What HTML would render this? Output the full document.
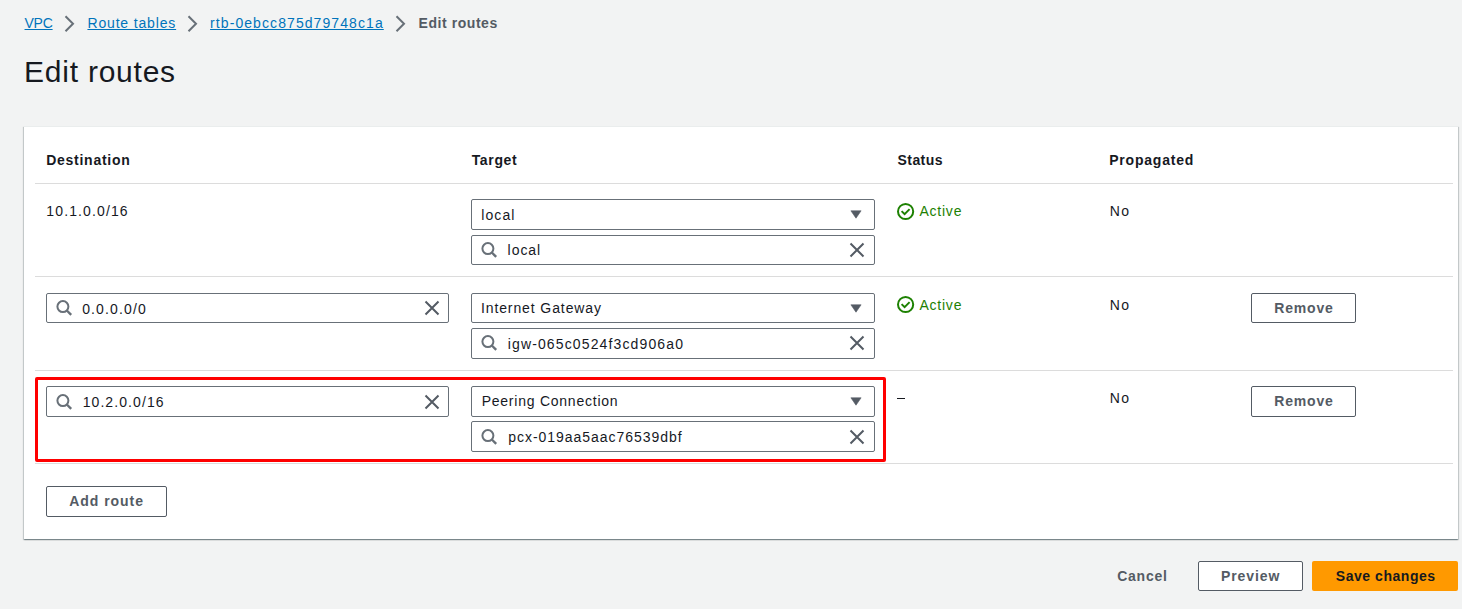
<!DOCTYPE html>
<html><head><meta charset="utf-8"><title>Edit routes</title>
<style>
html,body{margin:0;padding:0;}
body{width:1462px;height:609px;background:#f2f3f3;position:relative;overflow:hidden;font-family:'Liberation Sans', sans-serif;}
.t{position:absolute;white-space:nowrap;}
.ic{position:absolute;overflow:visible;}
.card{position:absolute;left:24px;top:126px;width:1434px;height:413px;background:#fff;border-top:1px solid #eaeded;box-sizing:border-box;box-shadow:0 1px 1px 0 rgba(0,28,36,.3),1px 1px 1px 0 rgba(0,28,36,.15),-1px 1px 1px 0 rgba(0,28,36,.15);}
.hr{position:absolute;left:35px;width:1418px;height:1px;background:#dcdcdc;}
.inp{position:absolute;box-sizing:border-box;border:1px solid #687078;border-radius:2px;background:#fff;}
.btn{position:absolute;box-sizing:border-box;border:1px solid #545b64;border-radius:2px;background:#fff;}
.primary{position:absolute;box-sizing:border-box;border-radius:2px;background:#ff9900;}
.red{position:absolute;left:35px;top:377px;width:851px;height:85px;box-sizing:border-box;border:3px solid #ff0000;border-radius:2px;}
.dash{position:absolute;left:897px;top:398px;width:8px;height:1px;background:#16191f;}
</style></head><body>
<div class="t" style="left:24.54px;top:13.00px;font-size:14px;line-height:20px;color:#0073bb;letter-spacing:-0.246px;text-decoration:underline;">VPC</div>
<div class="t" style="left:87.45px;top:13.00px;font-size:14px;line-height:20px;color:#0073bb;letter-spacing:0.841px;text-decoration:underline;">Route tables</div>
<div class="t" style="left:210.07px;top:13.00px;font-size:14px;line-height:20px;color:#0073bb;letter-spacing:1.081px;text-decoration:underline;">rtb-0ebcc875d79748c1a</div>
<div class="t" style="left:418.56px;top:13.00px;font-size:14px;line-height:20px;font-weight:700;color:#545b64;letter-spacing:0.559px;">Edit routes</div>
<svg class="ic" style="left:64px;top:15px;" width="12" height="18" viewBox="0 0 12 18"><path d="M1.5 1.2 L9 8.7 L1.5 16.2" fill="none" stroke="#687078" stroke-width="2"/></svg>
<svg class="ic" style="left:187px;top:15px;" width="12" height="18" viewBox="0 0 12 18"><path d="M1.5 1.2 L9 8.7 L1.5 16.2" fill="none" stroke="#687078" stroke-width="2"/></svg>
<svg class="ic" style="left:395px;top:15px;" width="12" height="18" viewBox="0 0 12 18"><path d="M1.5 1.2 L9 8.7 L1.5 16.2" fill="none" stroke="#687078" stroke-width="2"/></svg>
<div class="t" style="left:24.04px;top:52.00px;font-size:30px;line-height:40px;color:#16191f;letter-spacing:0.764px;">Edit routes</div>
<div class="card"></div>
<div class="t" style="left:46.26px;top:150.00px;font-size:14px;line-height:20px;font-weight:700;color:#16191f;letter-spacing:0.728px;">Destination</div>
<div class="t" style="left:471.64px;top:150.00px;font-size:14px;line-height:20px;font-weight:700;color:#16191f;letter-spacing:0.668px;">Target</div>
<div class="t" style="left:897.50px;top:150.00px;font-size:14px;line-height:20px;font-weight:700;color:#16191f;letter-spacing:0.438px;">Status</div>
<div class="t" style="left:1109.16px;top:150.00px;font-size:14px;line-height:20px;font-weight:700;color:#16191f;letter-spacing:0.794px;">Propagated</div>
<div class="hr" style="top:183px"></div>
<div class="hr" style="top:276px"></div>
<div class="hr" style="top:370px"></div>
<div class="hr" style="top:463px"></div>
<div class="t" style="left:46.33px;top:201.00px;font-size:14px;line-height:20px;color:#16191f;letter-spacing:1.122px;">10.1.0.0/16</div>
<div class="inp" style="left:471px;top:199px;width:404px;height:31px;"></div>
<div class="t" style="left:481.36px;top:205.00px;font-size:14px;line-height:20px;color:#16191f;letter-spacing:1.047px;">local</div>
<svg class="ic" style="left:850px;top:210.4px;" width="12" height="9" viewBox="0 0 12 9"><path d="M0.9 0.8 H11.1 L6 8.2 Z" fill="#545b64" stroke="#545b64" stroke-width="0.6" stroke-linejoin="round"/></svg>
<div class="inp" style="left:471px;top:235px;width:404px;height:30px;"></div>
<svg class="ic" style="left:481px;top:242px;" width="16" height="16" viewBox="0 0 16 16"><circle cx="6.9" cy="6.6" r="5.5" fill="none" stroke="#687078" stroke-width="2"/><path d="M10.8 10.5 L15.2 14.9" stroke="#687078" stroke-width="2.4"/></svg>
<div class="t" style="left:507.56px;top:240.00px;font-size:14px;line-height:20px;color:#16191f;letter-spacing:0.972px;">local</div>
<svg class="ic" style="left:848.6px;top:241.75px;" width="16" height="16" viewBox="0 0 16 16"><path d="M1.5 1.5 L14.5 14.5 M14.5 1.5 L1.5 14.5" stroke="#545b64" stroke-width="2"/></svg>
<svg class="ic" style="left:897px;top:203px;" width="17" height="17" viewBox="0 0 17 17"><circle cx="8.6" cy="8.5" r="7.6" fill="none" stroke="#1d8102" stroke-width="2"/><path d="M4.6 8.1 L7.6 11.1 L12.6 6.1" fill="none" stroke="#1d8102" stroke-width="2"/></svg>
<div class="t" style="left:919.47px;top:201.00px;font-size:14px;line-height:20px;color:#1d8102;letter-spacing:0.765px;">Active</div>
<div class="t" style="left:1109.65px;top:201.00px;font-size:14px;line-height:20px;color:#16191f;letter-spacing:1.440px;">No</div>
<div class="inp" style="left:46px;top:293px;width:403px;height:30px;"></div>
<svg class="ic" style="left:56px;top:300px;" width="16" height="16" viewBox="0 0 16 16"><circle cx="6.9" cy="6.6" r="5.5" fill="none" stroke="#687078" stroke-width="2"/><path d="M10.8 10.5 L15.2 14.9" stroke="#687078" stroke-width="2.4"/></svg>
<div class="t" style="left:82.15px;top:299.00px;font-size:14px;line-height:20px;color:#16191f;letter-spacing:1.151px;">0.0.0.0/0</div>
<svg class="ic" style="left:423.75px;top:299.75px;" width="16" height="16" viewBox="0 0 16 16"><path d="M1.5 1.5 L14.5 14.5 M14.5 1.5 L1.5 14.5" stroke="#545b64" stroke-width="2"/></svg>
<div class="inp" style="left:471px;top:293px;width:404px;height:30px;"></div>
<div class="t" style="left:480.91px;top:298.00px;font-size:14px;line-height:20px;color:#16191f;letter-spacing:0.900px;">Internet Gateway</div>
<svg class="ic" style="left:850px;top:304.4px;" width="12" height="9" viewBox="0 0 12 9"><path d="M0.9 0.8 H11.1 L6 8.2 Z" fill="#545b64" stroke="#545b64" stroke-width="0.6" stroke-linejoin="round"/></svg>
<div class="inp" style="left:471px;top:328px;width:404px;height:31px;"></div>
<svg class="ic" style="left:481px;top:335px;" width="16" height="16" viewBox="0 0 16 16"><circle cx="6.9" cy="6.6" r="5.5" fill="none" stroke="#687078" stroke-width="2"/><path d="M10.8 10.5 L15.2 14.9" stroke="#687078" stroke-width="2.4"/></svg>
<div class="t" style="left:507.76px;top:334.00px;font-size:14px;line-height:20px;color:#16191f;letter-spacing:1.131px;">igw-065c0524f3cd906a0</div>
<svg class="ic" style="left:848.6px;top:334.75px;" width="16" height="16" viewBox="0 0 16 16"><path d="M1.5 1.5 L14.5 14.5 M14.5 1.5 L1.5 14.5" stroke="#545b64" stroke-width="2"/></svg>
<svg class="ic" style="left:897px;top:296px;" width="17" height="17" viewBox="0 0 17 17"><circle cx="8.6" cy="8.5" r="7.6" fill="none" stroke="#1d8102" stroke-width="2"/><path d="M4.6 8.1 L7.6 11.1 L12.6 6.1" fill="none" stroke="#1d8102" stroke-width="2"/></svg>
<div class="t" style="left:919.47px;top:295.00px;font-size:14px;line-height:20px;color:#1d8102;letter-spacing:0.765px;">Active</div>
<div class="t" style="left:1109.65px;top:295.00px;font-size:14px;line-height:20px;color:#16191f;letter-spacing:1.440px;">No</div>
<div class="btn" style="left:1251px;top:293px;width:105px;height:30px;"></div>
<div class="t" style="left:1274.36px;top:298.00px;font-size:14px;line-height:20px;font-weight:700;color:#545b64;letter-spacing:0.789px;">Remove</div>
<div class="red"></div>
<div class="inp" style="left:46px;top:386px;width:403px;height:31px;"></div>
<svg class="ic" style="left:56px;top:394px;" width="16" height="16" viewBox="0 0 16 16"><circle cx="6.9" cy="6.6" r="5.5" fill="none" stroke="#687078" stroke-width="2"/><path d="M10.8 10.5 L15.2 14.9" stroke="#687078" stroke-width="2.4"/></svg>
<div class="t" style="left:82.63px;top:392.00px;font-size:14px;line-height:20px;color:#16191f;letter-spacing:1.092px;">10.2.0.0/16</div>
<svg class="ic" style="left:423.75px;top:393.75px;" width="16" height="16" viewBox="0 0 16 16"><path d="M1.5 1.5 L14.5 14.5 M14.5 1.5 L1.5 14.5" stroke="#545b64" stroke-width="2"/></svg>
<div class="inp" style="left:471px;top:386px;width:404px;height:31px;"></div>
<div class="t" style="left:481.65px;top:391.00px;font-size:14px;line-height:20px;color:#16191f;letter-spacing:0.764px;">Peering Connection</div>
<svg class="ic" style="left:850px;top:397.4px;" width="12" height="9" viewBox="0 0 12 9"><path d="M0.9 0.8 H11.1 L6 8.2 Z" fill="#545b64" stroke="#545b64" stroke-width="0.6" stroke-linejoin="round"/></svg>
<div class="inp" style="left:471px;top:421px;width:404px;height:31px;"></div>
<svg class="ic" style="left:481px;top:429px;" width="16" height="16" viewBox="0 0 16 16"><circle cx="6.9" cy="6.6" r="5.5" fill="none" stroke="#687078" stroke-width="2"/><path d="M10.8 10.5 L15.2 14.9" stroke="#687078" stroke-width="2.4"/></svg>
<div class="t" style="left:508.20px;top:427.00px;font-size:14px;line-height:20px;color:#16191f;letter-spacing:0.968px;">pcx-019aa5aac76539dbf</div>
<svg class="ic" style="left:848.6px;top:428.75px;" width="16" height="16" viewBox="0 0 16 16"><path d="M1.5 1.5 L14.5 14.5 M14.5 1.5 L1.5 14.5" stroke="#545b64" stroke-width="2"/></svg>
<div class="dash"></div>
<div class="t" style="left:1109.65px;top:388.00px;font-size:14px;line-height:20px;color:#16191f;letter-spacing:1.440px;">No</div>
<div class="btn" style="left:1251px;top:386px;width:105px;height:31px;"></div>
<div class="t" style="left:1274.36px;top:391.00px;font-size:14px;line-height:20px;font-weight:700;color:#545b64;letter-spacing:0.789px;">Remove</div>
<div class="btn" style="left:46px;top:486px;width:121px;height:31px;"></div>
<div class="t" style="left:69.25px;top:491.00px;font-size:14px;line-height:20px;font-weight:700;color:#545b64;letter-spacing:0.953px;">Add route</div>
<div class="t" style="left:1117.23px;top:566.00px;font-size:14px;line-height:20px;font-weight:700;color:#545b64;letter-spacing:0.751px;">Cancel</div>
<div class="btn" style="left:1198px;top:561px;width:105px;height:30px;"></div>
<div class="t" style="left:1220.96px;top:566.00px;font-size:14px;line-height:20px;font-weight:700;color:#545b64;letter-spacing:0.914px;">Preview</div>
<div class="primary" style="left:1312px;top:561px;width:146px;height:30px;"></div>
<div class="t" style="left:1335.80px;top:566.00px;font-size:14px;line-height:20px;font-weight:700;color:#16191f;letter-spacing:0.536px;">Save changes</div>
</body></html>
